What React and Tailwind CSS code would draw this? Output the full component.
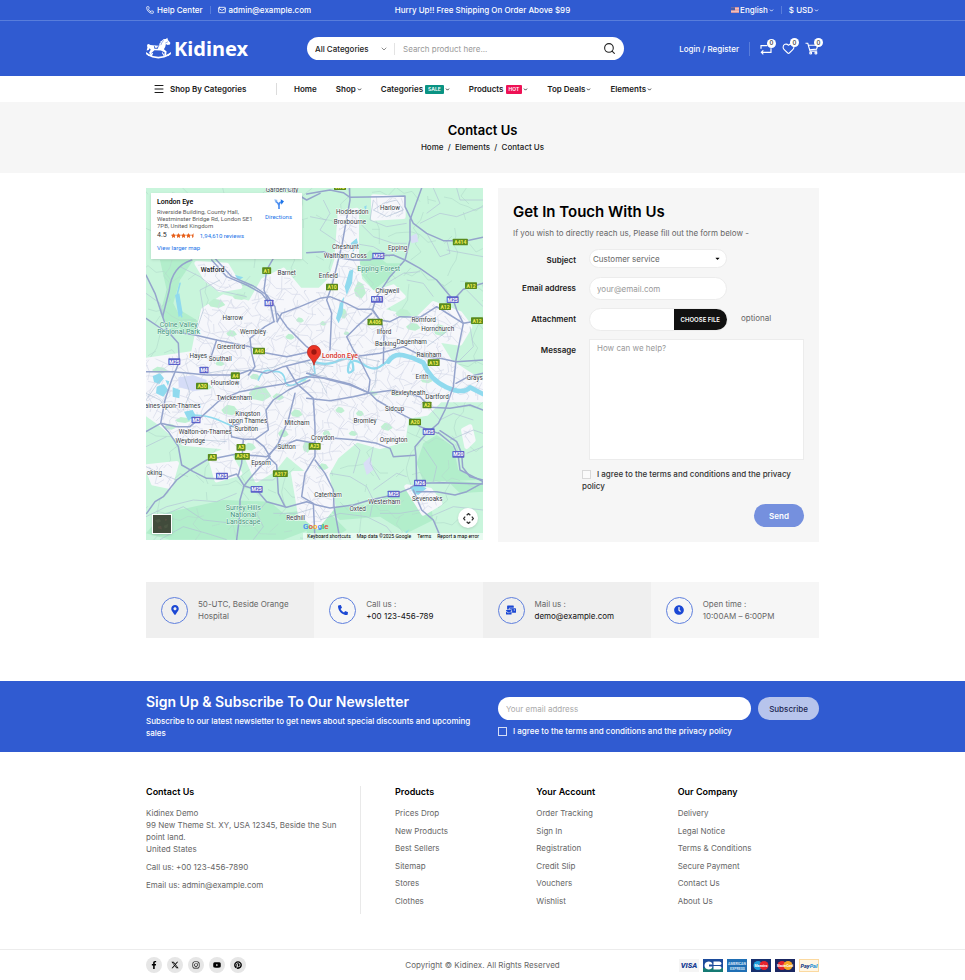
import React, { useState } from "react";
import { ChevronDown, Mail, Menu, Phone, Search, Heart } from "lucide-react";
import { FaMapMarkerAlt, FaPhoneAlt, FaMailBulk, FaClock, FaFacebookF, FaInstagram, FaYoutube, FaPinterest, FaStar, FaStarHalf, FaCaretDown } from "react-icons/fa";
import { FaXTwitter } from "react-icons/fa6";

const navItems = [
    { label: "Home" },
    { label: "Shop", menu: true },
    { label: "Categories", menu: true, tag: "SALE", tagClass: "bg-[#0a9383]" },
    { label: "Products", menu: true, tag: "HOT", tagClass: "bg-[#ee1155]" },
    { label: "Top Deals", menu: true },
    { label: "Elements", menu: true },
];

const infoCards = [
    { icon: FaMapMarkerAlt, first: "50-UTC, Beside Orange", second: "Hospital" },
    { icon: FaPhoneAlt, first: "Call us :", second: "+00 123-456-789", dark: true },
    { icon: FaMailBulk, first: "Mail us :", second: "demo@example.com", dark: true },
    { icon: FaClock, first: "Open time :", second: "10:00AM – 6:00PM" },
];

const footerColumns = [
    { title: "Products", links: ["Prices Drop", "New Products", "Best Sellers", "Sitemap", "Stores", "Clothes"] },
    { title: "Your Account", links: ["Order Tracking", "Sign In", "Registration", "Credit Slip", "Vouchers", "Wishlist"] },
    { title: "Our Company", links: ["Delivery", "Legal Notice", "Terms & Conditions", "Secure Payment", "Contact Us", "About Us"] },
];

const socials = [
    { name: "Facebook", icon: FaFacebookF },
    { name: "X", icon: FaXTwitter },
    { name: "Instagram", icon: FaInstagram },
    { name: "YouTube", icon: FaYoutube },
    { name: "Pinterest", icon: FaPinterest },
];

// ---- map data, in the units of the map's viewBox ----

const mainRoads = [
    "M155 240Q95 260 88 330L68 410L82 452L115 490L118 545L95 600L75 660L62 730L85 755L115 800L125 855L160 875L200 895L245 897L290 882L312 917L350 930L380 965L440 982L500 965L530 975L570 984L640 975L690 960L760 945L810 925L830 910L828 830L825 800L855 765L895 730L915 690L940 620L948 540L970 430L950 390L940 360L890 300L840 265L795 240L760 225L715 228L690 240L640 240L605 235L550 215L500 218",
    "M18 285L45 340L68 410",
    "M215 240L260 290L320 315L365 340L392 375L402 425",
    "M222 232L275 290L340 318L380 345L405 380L412 425",
    "M400 235L380 270L372 330L385 365",
    "M402 425L375 440L330 475L335 520L345 560L325 585",
    "M412 425L425 400L480 380L540 355L570 350L620 370L655 388L695 388L720 420L750 425L780 410L840 412L890 380L930 405L970 430L1029 420",
    "M412 400L440 440L470 470L500 500L520 515",
    "M628 24L630 60L605 200L595 240L575 320L560 360L575 400L570 510",
    "M845 24L810 120L810 180L795 240L750 290L710 350L698 388L725 430L732 460L730 550",
    "M500 42L570 30L610 38L630 52L730 50L795 48L795 80L820 130L860 160L910 182L980 182L1029 172",
    "M940 360L970 328L1029 310",
    "M695 400L650 440L620 470L640 510L660 540",
    "M18 415L70 450L165 465L230 480L330 500L375 518L440 530L510 515",
    "M230 480L210 540",
    "M440 24L500 60L540 40",
    "M20 1000L45 965L70 950L110 900L150 870L200 840L290 822L380 830L410 800L445 790L470 780L525 790",
    "M18 755L62 730L110 740L150 740L185 710L240 660L300 635L370 622L430 612L500 590L560 595L630 612L690 640",
    "M18 575L100 575L200 585L290 585L330 570L380 580L430 560L510 540",
    "M275 770L310 778L345 778L372 800L390 830L360 860L330 895L312 917L300 960L300 1000L290 1079",
    "M275 770L270 740L300 730",
    "M310 778L305 850L295 885",
    "M345 778L385 750L378 690L400 660L445 630L510 600",
    "M465 640L445 720L415 790L385 830L410 855L415 940L435 980",
    "M440 560L470 610L520 655L525 740L525 830L495 880L485 950L520 970L525 1079",
    "M525 840L555 880L580 930L582 980L600 1079",
    "M585 775L650 780L710 790L750 805L760 830L825 826",
    "M895 758L940 795L955 830L960 870L1029 905",
    "M900 752L950 785L965 820L968 862L990 890L1029 900",
    "M840 910L910 908L1029 912",
    "M830 935L890 935L945 945L980 935L1029 908",
    "M820 930L845 990L880 1020L905 1079",
    "M500 580L570 600L630 615L690 640L760 630L840 650L870 682L930 685L990 675L1029 690",
    "M500 655L570 662L640 650L685 640L690 600L660 540",
    "M690 640L710 660L770 695L815 718L840 740L895 760",
    "M640 530L720 520L790 500L850 530L900 535L948 545L1029 540",
    "M948 610L985 590L1029 580",
];

const minorRoads = [
    "M18 340L60 370L70 410M120 260L180 290L230 330L320 350M165 465L190 390L180 330L240 300",
    "M860 160L900 230L930 220L920 180M920 210L1029 230M840 130L900 100L950 110L1029 80M700 60L690 120L740 140L800 130",
    "M640 110L700 170L760 190L800 190M640 190L700 200L750 230M730 70L770 60L790 90L740 110L700 90Z",
    "M18 1010L80 980L160 960L230 965L290 940M60 1010L130 980L190 1020L280 1030M18 860L60 880L110 900",
    "M18 800L80 770M120 790L190 780L260 785M330 900L400 900L420 880M380 965L350 1000L370 1040L340 1079",
    "M570 880L630 890L680 920L700 960L690 1010M640 880L660 810L640 790M700 930L770 880L800 890M700 800L690 850L720 900",
    "M540 1020L600 1000L680 1010L740 1040L770 1079M840 990L780 1000L720 1000M870 1010L940 980L1029 990",
    "M850 800L890 860L880 905M930 780L1000 750L1029 760M870 685L900 720L940 700L1000 720M980 820L1029 800",
    "M980 330L1029 380M950 430L900 470L860 500M990 440L1000 500L960 540M800 300L850 310L880 350M740 310L790 280L840 275",
    "M550 60L570 100L540 150L600 190M510 110L560 120M880 24L900 70L860 100M950 24L960 60L1029 60",
    "M18 640L60 660L90 700M130 580L150 640L130 690M60 1079L130 1040L200 1060L260 1079M400 1000L470 1000L520 985",
    "M200 580L260 570L330 572L400 562L450 540L520 552L580 560M510 560L540 600L560 640M380 560L410 590L440 620L470 615",
    "M540 1015L525 990M18 660L60 600M720 545L650 530L590 545L520 535M715 540L705 610L690 638",
    "M500 540L515 560L508 580L560 590M560 550L545 575L520 590L500 575",
];

const darkWoods = [
    "M60 240L160 240L120 300L100 370L130 430L100 460L60 400L80 330Z",
    "M120 390L170 420L180 450L120 460Z",
    "M690 210L740 250L790 250L740 300L700 330L670 290L640 270Z",
    "M140 985L250 960L390 965L430 1000L530 985L560 1030L430 1079L90 1079L18 1060L70 1000Z",
    "M560 985L680 975L800 930L870 960L880 1020L800 1060L720 1010L600 1020Z",
    "M890 765L940 800L955 870L1020 900L850 905L830 850L850 790Z",
    "M340 625L380 615L390 650L350 690L330 660Z",
    "M920 900L1029 910L1029 935L960 940Z",
    "M500 1000L560 990L620 1050L570 1079L500 1079Z",
];

const urbanAreas = [
    "M170 470L190 390L250 350L330 370L370 300L430 270L480 330L540 330L570 300L590 240L600 100L650 90L650 230L660 300L700 340L760 320L790 350L720 390L830 420L880 370L960 400L990 440L960 490L890 480L930 545L1029 610L1029 660L900 660L860 700L800 710L790 780L720 800L650 780L590 830L550 900L500 870L440 820L400 870L350 900L320 830L240 800L130 790L60 730L18 700L18 540L160 520Z",
    "M170 250L260 255L300 320L240 330L200 300Z",
    "M700 50L790 55L790 110L700 115Z",
    "M20 860L110 850L90 920L40 910Z",
    "M460 880L560 880L580 980L530 1040L480 1000Z",
    "M800 920L870 930L900 970L850 1000Z",
    "M990 740L1000 780L980 800L970 750Z",
    "M210 830L260 810L300 880L230 900Z",
];

const parks = [
    [230, 370, 26, 14], [300, 350, 22, 10], [275, 460, 16, 10], [450, 470, 14, 9], [480, 420, 12, 8], [610, 400, 12, 16], [660, 330, 18, 26],
    [820, 440, 22, 12], [790, 400, 24, 14], [900, 450, 20, 18], [360, 640, 34, 24], [345, 590, 16, 9], [415, 650, 18, 10], [490, 600, 10, 6],
    [600, 690, 14, 10], [660, 700, 12, 9], [700, 640, 14, 7], [430, 760, 16, 12], [500, 800, 12, 18], [270, 690, 26, 16], [200, 620, 16, 9],
    [130, 720, 24, 9], [470, 700, 18, 12], [560, 760, 12, 10], [640, 760, 14, 8], [740, 740, 18, 12], [770, 640, 16, 9], [860, 600, 18, 10],
    [240, 550, 14, 8], [60, 570, 24, 10], [90, 740, 18, 9], [330, 800, 18, 12], [550, 860, 16, 10], [620, 460, 9, 6], [550, 430, 10, 7],
];

const places = [
    ["Garden City", 426, 36], ["Hoddesdon", 637, 103], ["Harlow", 750, 90], ["Broxbourne", 630, 133], ["Cheshunt", 616, 206],
    ["Waltham Cross", 616, 234], ["Epping", 773, 209], ["Enfield", 565, 294], ["Chigwell", 742, 339], ["Barnet", 440, 285],
    ["Harrow", 278, 421], ["Wembley", 339, 461], ["Greenford", 273, 507], ["Hayes", 175, 533], ["Southall", 241, 543],
    ["Romford", 851, 426], ["Hornchurch", 893, 453], ["Ilford", 732, 463], ["Barking", 737, 497], ["Dagenham", 815, 492],
    ["Rainham", 867, 531], ["Hounslow", 255, 616], ["Twickenham", 283, 660], ["aines-upon-Thames", 98, 684], ["Kingston", 323, 709],
    ["upon Thames", 324, 728], ["Surbiton", 319, 752], ["Walton-on-Thames", 196, 761], ["Weybridge", 151, 789], ["Mitcham", 471, 735],
    ["Sutton", 440, 807], ["Epsom", 363, 854], ["Croydon", 548, 780], ["Bromley", 675, 728], ["Sidcup", 764, 693],
    ["Bexleyheath", 805, 646], ["Erith", 846, 597], ["Dartford", 891, 658], ["Orpington", 761, 786], ["Caterham", 564, 950],
    ["Oxted", 653, 993], ["Westerham", 733, 973], ["Sevenoaks", 862, 964], ["Redhill", 467, 1021], ["oking", 43, 886], ["Grays", 1004, 600],
];

const shields = [
    ["A10", 600, 20], ["A1", 380, 272], ["M1", 387, 369], ["A10", 576, 321], ["M25", 715, 228], ["A414", 961, 186], ["M11", 711, 358],
    ["M25", 938, 359], ["A12", 993, 317], ["A12", 915, 380], ["A12", 1011, 422], ["A406", 705, 426], ["A40", 357, 513], ["M25", 103, 545],
    ["A13", 881, 548], ["M4", 192, 570], ["A4", 286, 587], ["A30", 186, 618], ["M3", 168, 720], ["A3", 303, 802], ["A243", 307, 829],
    ["A3", 217, 832], ["M25", 246, 888], ["M25", 350, 928], ["A217", 421, 881], ["A23", 524, 799], ["A2", 861, 675], ["A20", 825, 726],
    ["M25", 866, 755], ["M20", 955, 823], ["M26", 840, 909], ["M25", 761, 942],
];

// a loose street mesh, bent by sine waves so that no two blocks are alike
const streets = [];
for (let i = 0; i < 46; i++) {
    let across = "";
    let down = "";
    for (let j = 0; j < 46; j++) {
        const u = 24 * j;
        const v = 24 * i;
        const w = 11 * Math.sin(i * 2.3 + j * 1.1) + 9 * Math.sin(j * 2.9 + i);
        const gap = (i * 7 + j * 5) % 9 < 2;
        across += `${gap || !j ? "M" : "L"}${u} ${Math.round(v + w + j * 4 - 90)}`;
        down += `${gap || !j ? "M" : "L"}${Math.round(v + w - j * 5 + 100)} ${u}`;
    }
    streets.push(across, down);
}

const LondonMap = () => (
    <svg viewBox="18 24 1011 1056" preserveAspectRatio="xMidYMid slice" className="block h-full w-full" role="img" aria-label="Map of London">
        <defs>
            <clipPath id="urban">
                {urbanAreas.map((d) => <path key={d} d={d} />)}
            </clipPath>
        </defs>
        <rect x="0" y="0" width="1100" height="1100" fill="#c9f5dc" />
        {darkWoods.map((d) => <path key={d} d={d} fill="#b2eecb" strokeLinejoin="round" />)}
        <g fill="none" stroke="#b3dccd" strokeWidth="2">
            {streets.filter((d, i) => i % 5 === 0).map((d) => <path key={d} d={d} />)}
        </g>
        {urbanAreas.map((d) => <path key={d} d={d} fill="#f6f7fb" stroke="#f6f7fb" strokeWidth="14" strokeLinejoin="round" />)}
        {parks.map(([x, y, rx, ry]) => (
            <path key={`${x}-${y}`} d={`M${x - rx} ${y}L${x - rx / 3} ${y - ry}L${x + rx / 2} ${y - ry * 0.7}L${x + rx} ${y + ry / 3}L${x + rx / 4} ${y + ry}L${x - rx * 0.7} ${y + ry * 0.7}Z`} fill="#bff0d2" />
        ))}
        <g fill="none" stroke="#d5dae8" strokeWidth="2" clipPath="url(#urban)">
            {streets.map((d) => <path key={d} d={d} />)}
        </g>
        <path d="M115 592L160 586L200 600L198 628L160 634L116 620Z" fill="#d5dcf7" />
        <path d="M670 850L690 830L700 870L680 885ZM810 170L830 160L835 185L815 190Z" fill="#d9def6" />
        <g fill="#90daee">
            <path d="M38 588L60 580L72 595L58 612L42 606ZM50 620L72 612L85 630L70 650L48 640ZM98 622L120 630L118 655L98 650ZM132 695L158 690L168 708L145 722ZM76 600L88 604L84 618Z" />
            <path d="M628 272L640 268L636 310L620 345L614 320ZM600 370L612 350L608 400L596 430L588 415ZM632 190L650 175L654 190L640 215ZM672 80L680 76L678 92Z" />
            <path d="M810 920L840 915L860 925L835 945L820 940ZM285 285L310 292L295 302ZM105 345L118 340L128 400L116 412ZM808 1048L800 1060L796 1056Z" />
        </g>
        <g fill="none" stroke="#90daee" strokeLinecap="round" strokeLinejoin="round">
            <path d="M745 545Q760 520 790 526T850 548Q870 600 920 622T990 622L1029 642" strokeWidth="14" />
            <path d="M520 545Q560 560 600 540T640 570Q620 590 625 560T665 550Q700 575 720 560L748 540" strokeWidth="7" />
            <path d="M520 540L525 580L480 605Q440 630 435 600T400 575Q370 560 355 600" strokeWidth="5" />
            <path d="M150 705Q200 705 230 718T280 740M120 310L110 350L125 410" strokeWidth="5" />
        </g>
        <g fill="none" stroke="#b2c3d6" strokeWidth="2" strokeLinejoin="round">
            {minorRoads.map((d) => <path key={d} d={d} />)}
        </g>
        <g fill="none" stroke="#95a4cc" strokeWidth="4.500" strokeLinejoin="round" strokeLinecap="round">
            {mainRoads.map((d) => <path key={d} d={d} />)}
        </g>
        <g fontFamily="Roboto, sans-serif" textAnchor="middle">
            <g fontSize="19" fill="#333a44" stroke="#ffffff" strokeWidth="3" paintOrder="stroke">
                {places.map(([name, x, y]) => <text key={name} x={x} y={y}>{name}</text>)}
            </g>
            <text x="218" y="277" fontSize="20" fontWeight="500" fill="#15181d" stroke="#ffffff" strokeWidth="3" paintOrder="stroke">Watford</text>
            <g fontSize="21" fill="#41917a" stroke="#e8fbf1" strokeWidth="3" paintOrder="stroke">
                <text x="116" y="440">Colne Valley</text>
                <text x="116" y="461">Regional Park</text>
                <text x="716" y="273">Epping Forest</text>
                <text x="310" y="990">Surrey Hills</text>
                <text x="310" y="1012">National</text>
                <text x="310" y="1033">Landscape</text>
            </g>
            {shields.map(([code, x, y]) => {
                const width = code.length * 9 + 9;
                return (
                    <g key={`${code}-${x}`}>
                        <rect x={x - width / 2} y={y - 10} width={width} height="20" rx="2" fill={code[0] === "M" ? "#5c62c9" : "#5a8a1c"} />
                        <text x={x} y={y + 6} fontSize="15" fontWeight="700" fill={code[0] === "M" ? "#ffffff" : "#f2ee58"}>{code}</text>
                    </g>
                );
            })}
            <text x="600" y="533" fontSize="21" fontWeight="500" fill="#d6322b" stroke="#ffffff" strokeWidth="3" paintOrder="stroke">London Eye</text>
        </g>
        <path d="M522 556C518 536 502 532 502 516A20 20 0 0 1 542 516C542 532 526 536 522 556Z" fill="#ea3325" stroke="#b3261c" strokeWidth="2" />
        <circle cx="522" cy="516" r="8" fill="#9c1710" />
    </svg>
);

const MapPanel = () => (
    <div className="relative h-[352px] overflow-hidden font-[Roboto,sans-serif]">
        <LondonMap />
        <div className="absolute left-[5px] top-[5px] flex h-[66px] w-[151px] justify-between bg-white px-1.5 py-1 text-[6px] leading-[7px] text-[#5b5b5b] shadow">
            <div>
                <p className="text-[7px] font-medium leading-[11px] text-black">London Eye</p>
                <p>Riverside Building, County Hall,</p>
                <p>Westminster Bridge Rd, London SE1</p>
                <p>7PB, United Kingdom</p>
                <div className="flex items-center gap-1 leading-[13px]">
                    <span className="text-[7px] text-[#333]">4.5</span>
                    <span className="flex text-[#e7611d]">
                        <FaStar size={5} /><FaStar size={5} /><FaStar size={5} /><FaStar size={5} /><FaStarHalf size={5} />
                    </span>
                    <a href="#reviews" className="text-[#1a73e8]">1,94,610 reviews</a>
                </div>
                <a href="#map" className="block leading-[12px] text-[#1a73e8]">View larger map</a>
            </div>
            <a href="#directions" className="flex flex-col items-center gap-1 pr-1 pt-0.5 text-[#1a73e8]">
                <svg viewBox="0 0 30 30" className="size-[10px]" aria-hidden="true">
                    <path d="M15 30V18Q15 11 22 9M15 20Q14 13 6 7" fill="none" stroke="#4a8df0" strokeWidth="5" />
                    <path d="M20 1L30 7L22 17Z" fill="#1a73e8" />
                    <path d="M1 1L11 3L4 11Z" fill="#8ab8f5" />
                </svg>
                Directions
            </a>
        </div>
        <button type="button" aria-label="Show satellite imagery" className="absolute bottom-[6px] left-[6px] size-5 border border-white bg-[#414b3b] shadow">
            <svg viewBox="0 0 20 20" className="block size-full" aria-hidden="true">
                <path d="M2 6L7 4L9 7L5 9ZM12 12L17 10L16 14L13 15Z" fill="#4b5643" />
                <path d="M5 13L9 12L10 16L6 15ZM13 4L16 5L14 7Z" fill="#554f42" />
            </svg>
        </button>
        <button type="button" aria-label="Map camera controls" className="absolute bottom-[12px] right-[5px] flex size-5 items-center justify-center rounded-full bg-white shadow">
            <svg viewBox="0 0 30 30" className="size-[11px]" fill="none" stroke="#333" strokeWidth="3.500" aria-hidden="true">
                <path d="M10 6L15 1.500L20 6M10 24L15 28.500L20 24M6 10L1.500 15L6 20M24 10L28.500 15L24 20" />
            </svg>
        </button>
        <p aria-label="Google" className="absolute bottom-[8px] left-[157px] text-[8px] font-medium leading-[11px]">
            <span className="text-[#4285f4]">G</span><span className="text-[#ea4335]">o</span><span className="text-[#f9ab00]">o</span><span className="text-[#4285f4]">g</span><span className="text-[#34a853]">l</span><span className="text-[#ea4335]">e</span>
        </p>
        <div className="absolute bottom-0 right-0 flex gap-1.5 bg-white/60 px-1 text-[5px] leading-[7px] text-black">
            <button type="button">Keyboard shortcuts</button>
            <span>Map data ©2025 Google</span>
            <a href="#terms">Terms</a>
            <a href="#report">Report a map error</a>
        </div>
    </div>
);

const Logo = () => (
    <a href="#home" className="flex items-center gap-[3px] text-white" aria-label="Kidinex">
        <svg viewBox="0 0 74 68" className="h-[23px] w-[25px]" aria-hidden="true">
            <path d="M3 50Q36 72 71 50" fill="none" stroke="#fff" strokeWidth="4.500" strokeLinecap="round" />
            <path d="M1 47L8 54M66 54L73 47" stroke="#fff" strokeWidth="4" strokeLinecap="round" />
            <path d="M13 24Q4 16 3 26Q6 30 2 40Q9 40 11 33L14 38L9 46L15 56L19 54L16 47L25 39L44 40L55 45L54 55L59 56L61 43L53 36Q58 30 59 21L64 24L71 22L72 17L65 9L63 2L59 6Q51 5 48 10L41 15L44 17L38 21L41 24Q39 26 36 26Z" fill="#fff" />
            <path d="M23 25Q29 33 38 25L35 35H25Z" fill="#305bd1" />
            <path d="M26 25Q30 29 35 26L33 32H27Z" fill="#fff" />
            <path d="M44 24Q46 14 53 10M57 18L65 14" fill="none" stroke="#305bd1" strokeWidth="1.500" />
            <path d="M20 47L16 55M48 46L54 56" stroke="#fff" strokeWidth="3" />
        </svg>
        <span className="font-['Noto_Sans',sans-serif] text-[20px] font-bold leading-6">Kidinex</span>
    </a>
);

const UsFlag = () => (
    <svg viewBox="0 0 16 11" className="h-[6px] w-[8px]" aria-hidden="true">
        <rect width="16" height="11" fill="#f7e9e9" />
        <path d="M0 1H16M0 4H16M0 7H16M0 10H16" stroke="#e0706c" strokeWidth="1.500" />
        <rect width="8" height="6" fill="#4a5da8" />
    </svg>
);

const CountIcon = ({ label, children }) => (
    <a href="#top" aria-label={label} className="relative block text-white">
        {children}
        <span className="absolute -right-1 -top-1 flex size-[9px] items-center justify-center rounded-full bg-white text-[6px] font-medium leading-none text-[#222]">0</span>
    </a>
);

const Header = () => (
    <header>
        <div className="bg-[#305bd1] text-[8px] font-medium leading-3 text-white">
            <div className="border-b border-[#587ddb]">
                <div className="mx-auto grid h-5 max-w-[673px] grid-cols-[1fr_auto_1fr] items-center">
                    <div className="flex items-center gap-[7px]">
                        <a href="#help" className="flex items-center gap-[3px]"><Phone size={8} strokeWidth={2.5} />Help Center</a>
                        <span className="h-2 w-px bg-[#587ddb]" />
                        <a href="#mail" className="flex items-center gap-[3px]"><Mail size={8} strokeWidth={2.5} />admin@example.com</a>
                    </div>
                    <p>Hurry Up!! Free Shipping On Order Above $99</p>
                    <div className="flex items-center justify-end gap-[7px]">
                        <button type="button" className="flex items-center gap-px"><UsFlag />English<ChevronDown size={5} strokeWidth={4} /></button>
                        <span className="h-2 w-px bg-[#587ddb]" />
                        <button type="button" className="flex items-center gap-px">$ USD<ChevronDown size={5} strokeWidth={4} /></button>
                    </div>
                </div>
            </div>
            <div className="mx-auto flex h-[55px] max-w-[673px] items-center">
                <div className="w-[161px]"><Logo /></div>
                <form className="flex h-[23px] w-[317px] items-center rounded-full bg-white px-2 text-[#222]" onSubmit={(e) => e.preventDefault()}>
                    <div className="relative flex w-20 items-center border-r border-[#e3e3e3]">
                        <select aria-label="Category" className="w-full appearance-none bg-transparent outline-none">
                            <option>All Categories</option>
                        </select>
                        <ChevronDown size={8} className="pointer-events-none absolute right-[6px] text-[#555]" />
                    </div>
                    <input type="search" aria-label="Search product" placeholder="Search product here..." className="min-w-0 flex-1 bg-transparent px-2 font-normal outline-none placeholder:text-[#999]" />
                    <button type="submit" aria-label="Search"><Search size={13} /></button>
                </form>
                <div className="flex flex-1 items-center justify-end">
                    <a href="#login">Login / Register</a>
                    <span className="mx-[10px] h-[14px] w-px bg-[#587ddb]" />
                    <div className="flex items-center gap-[10px]">
                        <CountIcon label="Compare">
                            <svg viewBox="0 0 36 36" className="size-3" fill="none" stroke="currentColor" strokeWidth="3.500" aria-hidden="true">
                                <path d="M3 17V8H22M33 16V28H5M10 22L4 28L10 34" />
                            </svg>
                        </CountIcon>
                        <CountIcon label="Wishlist"><Heart size={13} strokeWidth={2} /></CountIcon>
                        <CountIcon label="Cart">
                            <svg viewBox="0 0 42 40" className="h-[13px] w-[14px]" fill="none" stroke="currentColor" strokeWidth="3.500" aria-hidden="true">
                                <path d="M1 4H8L15 28H37M10 10H39L35 22L13 24" />
                                <circle cx="17" cy="34" r="3" />
                                <circle cx="33" cy="34" r="3" />
                            </svg>
                        </CountIcon>
                    </div>
                </div>
            </div>
        </div>
        <nav className="mx-auto flex h-[26px] max-w-[673px] items-center text-[8px] font-semibold leading-3 text-[#1b1b1b]">
            <button type="button" className="flex w-[131px] items-center gap-[5px] border-r border-[#dcdcdc] pl-[7px]">
                <Menu size={12} />Shop By Categories
            </button>
            <ul className="flex gap-[19px] pl-[17px]">
                {navItems.map((item) => (
                    <li key={item.label}>
                        <a href="#menu" className="flex items-center gap-px">
                            {item.label}
                            {item.tag && <span className={`ml-px rounded-[1px] px-[3px] text-[5px] leading-[9px] text-white ${item.tagClass}`}>{item.tag}</span>}
                            {item.menu && <ChevronDown size={5} strokeWidth={4} />}
                        </a>
                    </li>
                ))}
            </ul>
        </nav>
    </header>
);

const fieldClass = "w-[138px] rounded-full border border-[#ececec] bg-white px-[7px] text-[8px] outline-none placeholder:text-[#999]";

const ContactForm = () => {
    const [agreed, setAgreed] = useState(false);
    const [fileName, setFileName] = useState("");

    return (
        <form className="bg-[#f6f6f6] px-[15px] pb-[15px] pt-[14px] text-[8px] leading-3 text-[#666]" onSubmit={(e) => e.preventDefault()}>
            <h2 className="text-[15px] font-semibold leading-5 text-black">Get In Touch With Us</h2>
            <p className="mt-[5px]">If you wish to directly reach us, Please fill out the form below -</p>

            <div className="mt-[10px] grid grid-cols-[63px_1fr] gap-x-[13px] gap-y-2">
                <label htmlFor="subject" className="pt-[5px] text-right font-semibold text-[#222]">Subject</label>
                <div className="relative h-5 w-[138px]">
                    <select id="subject" className="h-[19px] w-full appearance-none rounded-full border border-[#ececec] bg-white px-[3px] outline-none">
                        <option>Customer service</option>
                        <option>Webmaster</option>
                    </select>
                    <FaCaretDown size={7} className="pointer-events-none absolute right-[6px] top-[6px] text-black" />
                </div>

                <label htmlFor="email" className="pt-[5px] text-right font-semibold text-[#222]">Email address</label>
                <input id="email" type="email" placeholder="your@email.com" className={`h-[23px] ${fieldClass}`} />

                <label htmlFor="attachment" className="pt-[5px] text-right font-semibold text-[#222]">Attachment</label>
                <div className="flex items-start gap-[13px]">
                    <label className="flex h-[23px] w-[139px] cursor-pointer overflow-hidden rounded-full border border-[#ececec] bg-white">
                        <input id="attachment" type="file" className="sr-only" onChange={(e) => setFileName(e.target.files[0] ? e.target.files[0].name : "")} />
                        <span className="min-w-0 flex-1 truncate px-2 leading-[21px]">{fileName}</span>
                        <span className="bg-[#111] px-[7px] text-[6px] font-semibold leading-[21px] text-white">CHOOSE FILE</span>
                    </label>
                    <span className="pt-1">optional</span>
                </div>

                <label htmlFor="message" className="pt-[5px] text-right font-semibold text-[#222]">Message</label>
                <textarea id="message" placeholder="How can we help?" className="h-[121px] w-full resize-none border border-[#ececec] bg-white px-[7px] py-0.5 outline-none placeholder:text-[#999]" />
            </div>

            <label className="ml-[69px] mt-2 block font-medium text-[#333]">
                <input type="checkbox" checked={agreed} onChange={(e) => setAgreed(e.target.checked)} className="mr-[6px] size-[9px] appearance-none border border-[#d8d8d8] bg-[#fafafa] align-middle checked:bg-[#305bd1]" />
                I agree to the terms and conditions and the privacy policy
            </label>
            <div className="mt-[12px] flex justify-end">
                <button type="submit" className="h-[23px] w-[50px] rounded-full bg-[#7590de] font-semibold text-white">Send</button>
            </div>
        </form>
    );
};

const Newsletter = () => (
    <section className="mt-[43px] bg-[#305bd1] text-[8px] font-medium leading-3 text-white">
        <div className="mx-auto grid h-[71px] max-w-[673px] grid-cols-[337fr_321fr] gap-[15px]">
            <div className="pt-[11px]">
                <h2 className="text-[14px] font-semibold leading-5">Sign Up &amp; Subscribe To Our Newsletter</h2>
                <p className="mt-[3px]">Subscribe to our latest newsletter to get news about special discounts and upcoming sales</p>
            </div>
            <form className="pt-4" onSubmit={(e) => e.preventDefault()}>
                <div className="flex gap-[7px]">
                    <input type="email" aria-label="Your email address" placeholder="Your email address" className="h-[23px] min-w-0 flex-1 rounded-full bg-white px-2 font-normal text-[#222] outline-none placeholder:text-[#aaa]" />
                    <button type="submit" className="h-[23px] w-[61px] rounded-full bg-[#b7c4ec] text-[#1b2450]">Subscribe</button>
                </div>
                <label className="mt-[5px] flex items-center gap-[6px]">
                    <input type="checkbox" className="size-[9px] appearance-none border border-white/80 checked:bg-white" />
                    I agree to the terms and conditions and the privacy policy
                </label>
            </form>
        </div>
    </section>
);

const payFrame = "h-[13px] w-5";

const Payments = () => (
    <div className="flex items-center justify-end gap-1 font-[Roboto,sans-serif]">
        <svg viewBox="0 0 40 26" className={payFrame} role="img" aria-label="Visa">
            <rect width="40" height="26" fill="#f5f5f5" />
            <text x="20" y="18" fontSize="15" fontWeight="900" fontStyle="italic" textAnchor="middle" fill="#1a3f94">VISA</text>
        </svg>
        <svg viewBox="0 0 40 26" className={payFrame} role="img" aria-label="Carte Bancaire">
            <rect width="40" height="26" fill="#1c4b9b" />
            <path d="M0 18H40V26H0Z" fill="#157a74" />
            <path d="M19 11H12V15H19Q18 21 11 21Q3 20 3 13Q3 6 11 5Q18 5 19 11ZM21 5H33Q37 6 37 9Q37 12 33 12H21ZM21 14H33Q37 14 37 17.500Q37 21 33 21H21Z" fill="#fff" />
        </svg>
        <svg viewBox="0 0 40 26" className={payFrame} role="img" aria-label="American Express">
            <rect width="40" height="26" fill="#1f6fb5" />
            <text x="20" y="12" fontSize="7" fontWeight="700" textAnchor="middle" fill="#d5e8f7">AMERICAN</text>
            <text x="21" y="21" fontSize="7" fontWeight="700" textAnchor="middle" fill="#d5e8f7">EXPRESS</text>
        </svg>
        <svg viewBox="0 0 40 26" className={payFrame} role="img" aria-label="Maestro">
            <rect width="40" height="26" fill="#16306f" />
            <circle cx="14" cy="13" r="9" fill="#1b9ddb" />
            <circle cx="26" cy="13" r="9" fill="#e4232c" />
            <text x="20" y="16" fontSize="7" fontWeight="700" textAnchor="middle" fill="#fff">Maestro</text>
        </svg>
        <svg viewBox="0 0 40 26" className={payFrame} role="img" aria-label="Mastercard">
            <rect width="40" height="26" fill="#1a2761" />
            <circle cx="14" cy="13" r="9" fill="#e4232c" />
            <circle cx="26" cy="13" r="9" fill="#f7a823" />
            <text x="20" y="16" fontSize="6" fontWeight="700" textAnchor="middle" fill="#fff">MasterCard</text>
        </svg>
        <svg viewBox="0 0 40 26" className={payFrame} role="img" aria-label="PayPal">
            <rect x="1" y="1" width="38" height="24" fill="#fff6e4" stroke="#fbd9a0" strokeWidth="2" />
            <text x="20" y="17" fontSize="11" fontWeight="900" fontStyle="italic" textAnchor="middle" fill="#1c3f87">Pay<tspan fill="#2a93d5">Pal</tspan></text>
        </svg>
    </div>
);

const Footer = () => (
    <footer className="text-[8px] leading-3 text-[#666]">
        <div className="mx-auto grid max-w-[673px] grid-cols-[215px_1fr] pb-[35px] pt-[34px]">
            <div className="h-32 border-r border-[#e9e9e9] pr-5">
                <h3 className="text-[9px] font-semibold text-black">Contact Us</h3>
                <address className="mt-[9px] not-italic">
                    <p>Kidinex Demo</p>
                    <p>99 New Theme St. XY, USA 12345, Beside the Sun point land.</p>
                    <p>United States</p>
                    <p className="mt-[6px]">Call us: +00 123-456-7890</p>
                    <p className="mt-[6px]">Email us: admin@example.com</p>
                </address>
            </div>
            <div className="grid grid-cols-3 pl-[34px]">
                {footerColumns.map((column) => (
                    <div key={column.title}>
                        <h3 className="text-[9px] font-semibold text-black">{column.title}</h3>
                        <ul className="mt-[9px] flex h-[100px] flex-col justify-between">
                            {column.links.map((link) => (
                                <li key={link}><a href="#link">{link}</a></li>
                            ))}
                        </ul>
                    </div>
                ))}
            </div>
        </div>
        <div className="border-t border-[#ececec]">
            <div className="mx-auto grid h-[30px] max-w-[673px] grid-cols-[1fr_auto_1fr] items-center">
                <div className="flex gap-[5px]">
                    {socials.map(({ name, icon: Icon }) => (
                        <a key={name} href="#social" aria-label={name} className="flex size-4 items-center justify-center rounded-full bg-[#e6e6e6] text-black"><Icon size={8} /></a>
                    ))}
                </div>
                <p>Copyright © Kidinex. All Rights Reserved</p>
                <Payments />
            </div>
        </div>
    </footer>
);

const App = () => (
    <div className="bg-white font-[Inter,sans-serif]">
        <Header />
        <div className="flex h-[71px] flex-col items-center justify-center bg-[#f6f6f6] text-[#222]">
            <h1 className="text-[13px] font-semibold leading-[18px] text-black">Contact Us</h1>
            <p className="text-[8px] font-medium leading-4">
                <a href="#home">Home</a>&nbsp; / &nbsp;<a href="#elements">Elements</a>&nbsp; / &nbsp;Contact Us
            </p>
        </div>
        <main className="mx-auto max-w-[673px] pt-[15px]">
            <div className="grid grid-cols-[337fr_321fr] gap-[15px]">
                <MapPanel />
                <ContactForm />
            </div>
            <div className="mt-[40px] grid grid-cols-4">
                {infoCards.map(({ icon: Icon, first, second, dark }) => (
                    <div key={first} className="flex h-14 items-center gap-[10px] bg-[#f6f6f6] pl-[15px] text-[8px] leading-3 text-[#666] odd:bg-[#efefef]">
                        <span className="flex size-[27px] shrink-0 items-center justify-center rounded-full border border-[#5f80de] text-[#1c48d4]"><Icon size={10} /></span>
                        <p>{first}<br /><span className={dark ? "text-[#111]" : ""}>{second}</span></p>
                    </div>
                ))}
            </div>
        </main>
        <Newsletter />
        <Footer />
    </div>
);

export default App;
